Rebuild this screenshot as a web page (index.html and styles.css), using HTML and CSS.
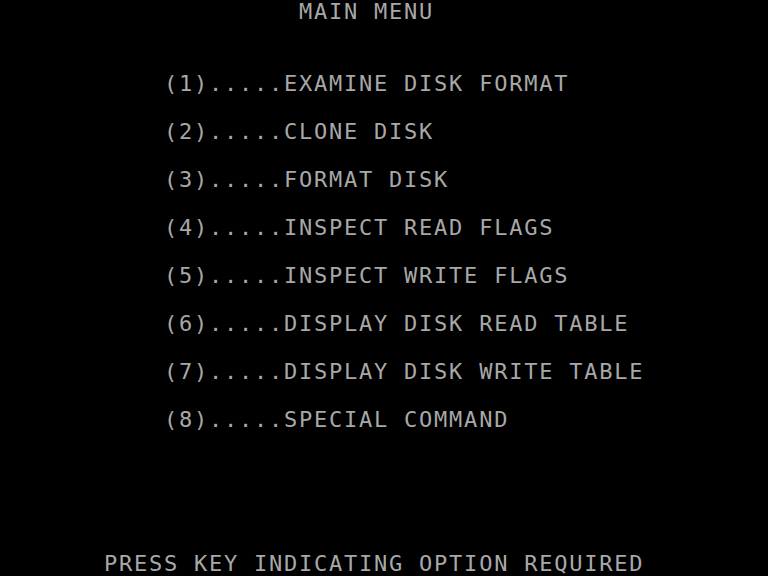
FILE: index.html
```html
<!DOCTYPE html>
<html lang="en">
<head>
    <meta charset="UTF-8">
    <title>Main Menu</title>
    <link rel="stylesheet" href="styles.css">
</head>
<body>
    <div class="screen">
        <div class="row">             MAIN MENU</div>
        <div class="row"></div>
        <div class="row"></div>
        <div class="row">    (1).....EXAMINE DISK FORMAT</div>
        <div class="row"></div>
        <div class="row">    (2).....CLONE DISK</div>
        <div class="row"></div>
        <div class="row">    (3).....FORMAT DISK</div>
        <div class="row"></div>
        <div class="row">    (4).....INSPECT READ FLAGS</div>
        <div class="row"></div>
        <div class="row">    (5).....INSPECT WRITE FLAGS</div>
        <div class="row"></div>
        <div class="row">    (6).....DISPLAY DISK READ TABLE</div>
        <div class="row"></div>
        <div class="row">    (7).....DISPLAY DISK WRITE TABLE</div>
        <div class="row"></div>
        <div class="row">    (8).....SPECIAL COMMAND</div>
        <div class="row"></div>
        <div class="row"></div>
        <div class="row"></div>
        <div class="row"></div>
        <div class="row"></div>
        <div class="row">PRESS KEY INDICATING OPTION REQUIRED</div>
    </div>
</body>
</html>
```

FILE: styles.css
```css
html, body {
    margin: 0;
    padding: 0;
    background: #000;
}

/* 40 x 24 text screen */
.screen {
    width: 768px;
    height: 576px;
    box-sizing: border-box;
    padding-left: 104px;
    overflow: hidden;
    background: #000;
    color: #a8a8a8;
    font-family: "DejaVu Sans Mono", monospace;
    font-size: 22px;
    letter-spacing: 1.76px;
}

.row {
    height: 24px;
    line-height: 24px;
    white-space: pre;
}
```
